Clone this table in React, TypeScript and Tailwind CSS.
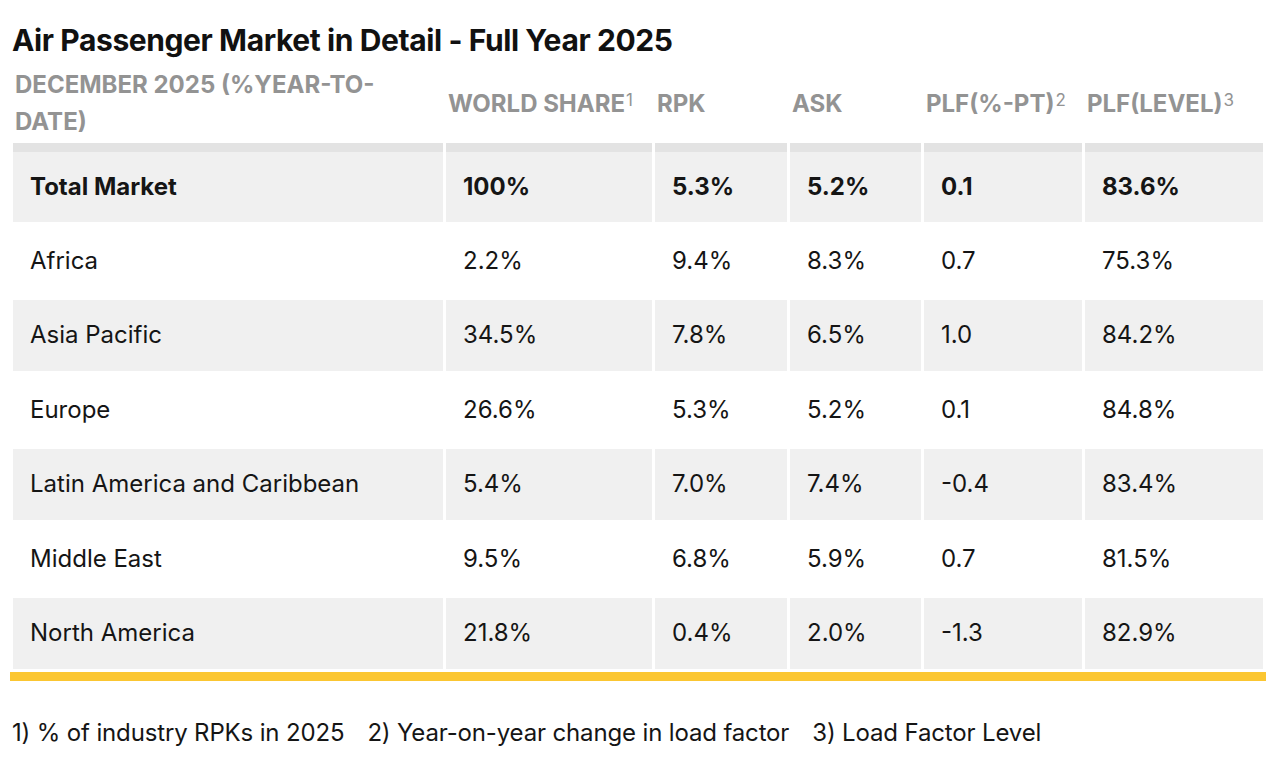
import * as React from "react";

type Row = {
  region: string;
  share: string;
  rpk: string;
  ask: string;
  plfPt: string;
  plfLevel: string;
};

const rows: Row[] = [
  { region: "Total Market", share: "100%", rpk: "5.3%", ask: "5.2%", plfPt: "0.1", plfLevel: "83.6%" },
  { region: "Africa", share: "2.2%", rpk: "9.4%", ask: "8.3%", plfPt: "0.7", plfLevel: "75.3%" },
  { region: "Asia Pacific", share: "34.5%", rpk: "7.8%", ask: "6.5%", plfPt: "1.0", plfLevel: "84.2%" },
  { region: "Europe", share: "26.6%", rpk: "5.3%", ask: "5.2%", plfPt: "0.1", plfLevel: "84.8%" },
  { region: "Latin America and Caribbean", share: "5.4%", rpk: "7.0%", ask: "7.4%", plfPt: "-0.4", plfLevel: "83.4%" },
  { region: "Middle East", share: "9.5%", rpk: "6.8%", ask: "5.9%", plfPt: "0.7", plfLevel: "81.5%" },
  { region: "North America", share: "21.8%", rpk: "0.4%", ask: "2.0%", plfPt: "-1.3", plfLevel: "82.9%" },
];

function Sup({ n }: { n: string }) {
  return <sup className="ml-[1px] text-[17px] font-normal relative -top-[6px]">{n}</sup>;
}

export default function App() {
  return (
    <div className="w-[1280px] h-[758px] bg-white font-['Inter',_'Liberation_Sans',_sans-serif] text-[#111]">
      <h2 className="pl-[12px] pt-[22px] text-[30px] leading-[37px] font-bold tracking-[-0.4px]">
        Air Passenger Market in Detail - Full Year 2025
      </h2>

      <table className="ml-[10px] mt-[4px] w-[1256px] table-fixed border-separate border-spacing-[3px] border-b-[9px] border-b-[#fbc631]">
        <colgroup>
          <col className="w-[430px]" />
          <col className="w-[206px]" />
          <col className="w-[132px]" />
          <col className="w-[131px]" />
          <col className="w-[158px]" />
          <col className="w-[178px]" />
        </colgroup>
        <thead>
          <tr className="text-left text-[24px] leading-[37px] font-bold uppercase text-[#939393]">
            <th className="pl-[2px] pr-[60px] align-middle font-bold">December 2025 (%Year-to-Date)</th>
            <th className="pl-[2px] align-middle font-bold">World Share<Sup n="1" /></th>
            <th className="pl-[2px] align-middle font-bold">RPK</th>
            <th className="pl-[2px] align-middle font-bold">ASK</th>
            <th className="pl-[2px] align-middle font-bold">PLF(%-PT)<Sup n="2" /></th>
            <th className="pl-[2px] align-middle font-bold">PLF(Level)<Sup n="3" /></th>
          </tr>
        </thead>
        <tbody>
          {rows.map((r, i) => {
            const isTotal = i === 0;
            const bg = i % 2 === 0 ? "bg-[#f0f0f0]" : "bg-white";
            const cell = `pl-[17px] align-middle text-[24px] ${bg} ${
              isTotal ? "h-[79px] border-t-[9px] border-t-[#e3e3e3] font-bold" : "h-[71.5px]"
            }`;
            return (
              <tr key={r.region} className="text-[#151515]">
                <td className={cell}>{r.region}</td>
                <td className={cell}>{r.share}</td>
                <td className={cell}>{r.rpk}</td>
                <td className={cell}>{r.ask}</td>
                <td className={cell}>{r.plfPt}</td>
                <td className={cell}>{r.plfLevel}</td>
              </tr>
            );
          })}
        </tbody>
      </table>

      <div className="mt-[37px] pl-[12px] flex gap-[23px] text-[24px] leading-[30px] tracking-[-0.15px] text-[#151515]">
        <span>1) % of industry RPKs in 2025</span>
        <span>2) Year-on-year change in load factor</span>
        <span>3) Load Factor Level</span>
      </div>
    </div>
  );
}
